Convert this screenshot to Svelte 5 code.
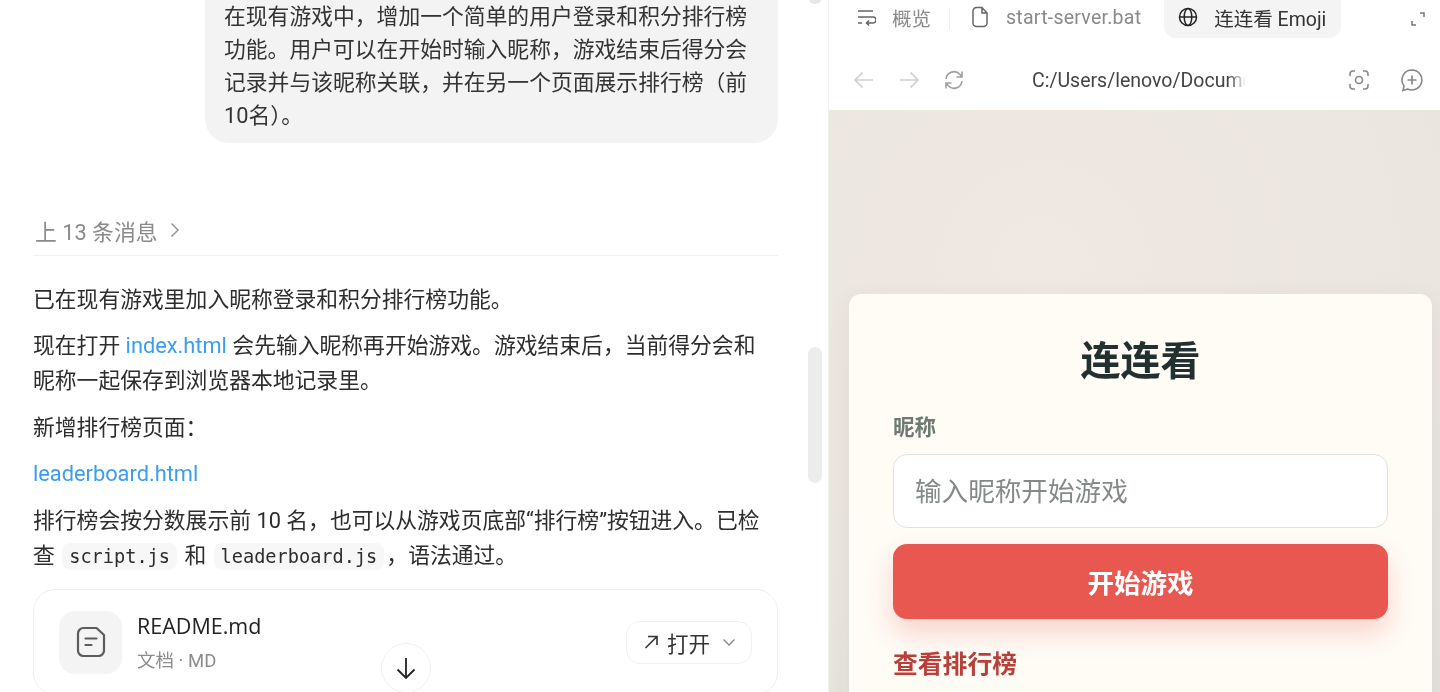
<script>
	const tabs = [
		{ label: '概览', icon: 'wrap' },
		{ label: 'start-server.bat', icon: 'file' },
		{ label: '连连看 Emoji', icon: 'globe', active: true }
	];
</script>

<div class="shell">
	<section class="chat">
		<div class="scroll">
			<div class="bubble">
				在现有游戏中，增加一个简单的用户登录和积分排行榜功能。用户可以在开始时输入昵称，游戏结束后得分会记录并与该昵称关联，并在另一个页面展示排行榜（前10名）。
			</div>
			<div class="earlier">
				<span>上 13 条消息</span>
				<svg width="12" height="18" viewBox="0 0 12 18"><path d="M2.5 2.5 9 9l-6.5 6.5" /></svg>
			</div>
			<div class="reply">
				<p>已在现有游戏里加入昵称登录和积分排行榜功能。</p>
				<p>现在打开 <a href="#top">index.html</a> 会先输入昵称再开始游戏。游戏结束后，当前得分会和昵称一起保存到浏览器本地记录里。</p>
				<p>新增排行榜页面：</p>
				<p><a href="#top">leaderboard.html</a></p>
				<p>排行榜会按分数展示前 10 名，也可以从游戏页底部“排行榜”按钮进入。已检查 <code>script.js</code> 和 <code>leaderboard.js</code>，语法通过。</p>
			</div>
			<div class="file-card">
				<div class="file-icon">
					<svg width="32" height="32" viewBox="0 0 32 32">
						<path d="M3 7.500a5.500 5.500 0 0 1 5.500-5.500h13L29 9v15.500a5.500 5.500 0 0 1-5.500 5.500h-15A5.500 5.500 0 0 1 3 24.500z" />
						<path d="M10.500 12.500h11M10.500 19h6" />
					</svg>
				</div>
				<div class="file-meta">
					<div class="file-name">README.md</div>
					<div class="file-type">文档 · MD</div>
				</div>
				<button class="open">
					<svg width="18" height="18" viewBox="0 0 18 18"><path d="M3.500 15 15 3.500M6 3.500h9V12" /></svg>
					<span>打开</span>
					<svg class="chev" width="16" height="16" viewBox="0 0 16 16"><path d="m2.500 5.500 5.500 5.500 5.500-5.500" /></svg>
				</button>
			</div>
		</div>
		<div class="thumb-top"></div>
		<div class="thumb"></div>
		<button class="down" aria-label="滚动到底部">
			<svg width="26" height="26" viewBox="0 0 26 26"><path d="M13 3v20M4.500 14.500 13 23l8.500-8.500" /></svg>
		</button>
	</section>

	<section class="preview">
		<div class="tabs">
			{#each tabs as tab, i}
				{#if i === 1}<span class="sep"></span>{/if}
				<div class="tab" class:active={tab.active} class:file={tab.icon === 'file'}>
					{#if tab.icon === 'wrap'}
						<svg width="20" height="20" viewBox="0 0 20 20"><path d="M2 4h15M2 10h15a2.700 2.700 0 0 1 0 6h-6M13 13.500 10.500 16l2.500 2.500M2 16h4" /></svg>
					{:else if tab.icon === 'file'}
						<svg width="20" height="22" viewBox="0 0 20 22"><path d="M3 5a3.500 3.500 0 0 1 3.500-3.500H12L17 7v10a3.500 3.500 0 0 1-3.500 3.500h-7A3.500 3.500 0 0 1 3 17zM12 1.500V7h5" /></svg>
					{:else}
						<svg width="20" height="20" viewBox="0 0 20 20"><circle cx="10" cy="10" r="8.500" /><ellipse cx="10" cy="10" rx="3.800" ry="8.500" /><path d="M1.500 10h17" /></svg>
					{/if}
					<span>{tab.label}</span>
				</div>
			{/each}
			<svg class="expand" width="16" height="16" viewBox="0 0 16 16"><path d="M10 2h4v4M6 14H2v-4" /></svg>
		</div>
		<div class="nav">
			<svg class="faint" width="22" height="22" viewBox="0 0 22 22"><path d="M20 11H2M9.500 3.500 2 11l7.500 7.500" /></svg>
			<svg class="faint" width="22" height="22" viewBox="0 0 22 22"><path d="M2 11h18M12.500 3.500 20 11l-7.500 7.500" /></svg>
			<svg class="reload" width="22" height="22" viewBox="0 0 22 22"><path d="M3 10a8 8 0 0 1 14-4.500l2 2.500M19 2.500V8h-5.500M19 12a8 8 0 0 1-14 4.500L3 14M3 19.500V14h5.500" /></svg>
			<div class="url">C:/Users/lenovo/Documents/game</div>
			<svg class="act" width="24" height="24" viewBox="0 0 24 24"><circle cx="12" cy="12" r="3.500" /><path d="M3 8V6a3 3 0 0 1 3-3h2M16 3h2a3 3 0 0 1 3 3v2M21 16v2a3 3 0 0 1-3 3h-2M8 21H6a3 3 0 0 1-3-3v-2" /></svg>
			<svg class="act" width="24" height="24" viewBox="0 0 24 24"><path d="M12 2a10 10 0 1 1-4.500 19L3 22.500l1-4.500A10 10 0 0 1 12 2zM12 7.500v9M7.500 12h9" /></svg>
		</div>
		<div class="page">
			<div class="card">
				<h1>连连看</h1>
				<div class="label">昵称</div>
				<input placeholder="输入昵称开始游戏" />
				<button class="start">开始游戏</button>
				<div class="rank-link">查看排行榜</div>
			</div>
		</div>
	</section>
</div>

<style>
	:global(body) {
		background: #fff;
	}
	.shell {
		display: flex;
		height: 692px;
		overflow: hidden;
		font-family: Roboto, "Noto Sans CJK SC", sans-serif;
		color: #2b2b2b;
		filter: blur(0.45px);
	}
	.chat {
		position: relative;
		width: 828px;
		flex-shrink: 0;
		border-right: 1px solid #f0f0f0;
		overflow: hidden;
	}
	.scroll {
		width: 745px;
		margin: -20px 0 0 33px;
	}
	.bubble {
		margin-left: 172px;
		width: 529px;
		padding: 20px 25px 11px 19px;
		background: #f3f3f3;
		border-radius: 24px;
		font-size: 21.8px;
		line-height: 33px;
		color: #333;
	}
	.earlier {
		display: flex;
		align-items: center;
		gap: 11px;
		margin-top: 70px;
		padding: 0 0 8px 2px;
		height: 34px;
		border-bottom: 1px solid #f1f1f1;
		font-size: 21.8px;
		color: #8a8a8a;
		box-sizing: content-box;
	}
	.earlier svg path {
		fill: none;
		stroke: #999;
		stroke-width: 1.500;
	}
	.reply {
		margin-top: 26.500px;
		padding-right: 8px;
		font-size: 21.8px;
		line-height: 34.500px;
		color: #2d2d2d;
	}
	.reply p {
		margin: 0 0 12.300px;
	}
	.reply a {
		color: #3a9df2;
		text-decoration: none;
	}
	.reply code {
		font-family: "DejaVu Sans Mono", monospace;
		font-size: 18.600px;
		padding: 3px 7px;
		margin: 0 2px;
		background: #f7f7f7;
		border-radius: 8px;
	}
	.file-card {
		display: flex;
		align-items: center;
		height: 106px;
		margin-top: 15.300px;
		padding: 0 25px;
		border: 1px solid #eeeeee;
		border-radius: 22px;
		box-sizing: border-box;
	}
	.file-icon {
		display: flex;
		align-items: center;
		justify-content: center;
		width: 63px;
		height: 63px;
		background: #f4f4f4;
		border-radius: 16px;
	}
	.file-icon path {
		fill: none;
		stroke: #5c5c5c;
		stroke-width: 2.200;
		stroke-linecap: round;
		stroke-linejoin: round;
	}
	.file-meta {
		flex: 1;
		margin-left: 15px;
		padding-top: 2px;
	}
	.file-name {
		font-family: "Open Sans", "Noto Sans CJK SC", sans-serif;
		font-size: 21.500px;
		line-height: 30px;
		color: #222;
	}
	.file-type {
		margin-top: 6px;
		font-size: 18.500px;
		line-height: 28px;
		color: #8b8b8b;
	}
	.open {
		display: flex;
		align-items: center;
		gap: 7px;
		height: 43px;
		width: 126px;
		padding: 0 12px 0 15px;
		background: #fff;
		border: 1px solid #f0f0f0;
		border-radius: 14px;
		font-family: inherit;
		font-size: 21.500px;
		color: #333;
		box-sizing: border-box;
	}
	.open svg path {
		fill: none;
		stroke: #333;
		stroke-width: 1.600;
	}
	.open .chev {
		margin-left: 4px;
	}
	.open .chev path {
		stroke: #888;
		stroke-width: 1.300;
	}
	.thumb-top,
	.thumb {
		position: absolute;
		left: 808px;
		width: 14px;
		background: #ececec;
		border-radius: 7px;
	}
	.thumb-top {
		top: -10px;
		height: 14px;
		background: #e6e6e6;
	}
	.thumb {
		top: 347px;
		height: 136px;
	}
	.down {
		position: absolute;
		left: 381px;
		top: 643px;
		display: flex;
		align-items: center;
		justify-content: center;
		width: 50px;
		height: 50px;
		padding: 0;
		background: #fff;
		border: 1px solid #eeeeee;
		border-radius: 50%;
	}
	.down path {
		fill: none;
		stroke: #222;
		stroke-width: 1.800;
	}
	.preview {
		flex: 1;
		min-width: 0;
		display: flex;
		flex-direction: column;
	}
	.preview svg {
		flex-shrink: 0;
		fill: none;
	}
	.tabs {
		display: flex;
		align-items: center;
		flex-shrink: 0;
		height: 38px;
		padding-left: 27px;
		font-size: 19.500px;
		color: #8a8a8a;
	}
	.tabs svg {
		stroke: #666;
		stroke-width: 1.500;
	}
	.tab {
		display: flex;
		align-items: center;
		gap: 16px;
		height: 38px;
		padding-bottom: 4px;
		box-sizing: border-box;
	}
	.tab.file {
		letter-spacing: 0.25px;
	}
	.sep {
		width: 1px;
		height: 22px;
		margin: 0 20px 0 18px;
		background: #eee;
	}
	.tab.active {
		margin-left: 23px;
		padding: 0 15px 4px 14px;
		gap: 16px;
		background: #f4f4f4;
		border-radius: 0 0 12px 12px;
		color: #333;
	}
	.tab.active svg {
		stroke: #222;
	}
	.tabs .expand {
		margin-left: auto;
		margin-right: 14px;
		stroke: #777;
	}
	.nav {
		display: flex;
		align-items: center;
		flex-shrink: 0;
		height: 72px;
		padding: 12px 16px 0 24px;
		box-sizing: border-box;
	}
	.nav svg {
		stroke: #888;
		stroke-width: 1.600;
	}
	.nav svg.faint {
		stroke: #cfcfcf;
		margin-right: 23px;
	}
	.nav svg.reload {
		stroke: #a0a0a0;
	}
	.url {
		width: 214px;
		margin: 0 101px 0 67px;
		overflow: hidden;
		white-space: nowrap;
		font-size: 19.500px;
		color: #444;
		mask-image: linear-gradient(to right, #000 92%, transparent);
	}
	.nav svg.act {
		margin-right: 29px;
	}
	.nav svg.act:last-child {
		margin-right: 0;
	}
	.page {
		flex: 1;
		padding: 184px 8px 0 20px;
		background: radial-gradient(circle at 35% 25%, #f0e8e2 0%, #ebe6e0 60%, #e4e2dc 100%);
	}
	.card {
		height: 440px;
		padding: 40px 44px 0;
		background: #fffbf5;
		border-radius: 12px;
		box-shadow: 0 8px 30px rgba(60, 50, 40, 0.07);
		box-sizing: border-box;
	}
	h1 {
		margin: 0 0 24px;
		text-align: center;
		font-size: 40px;
		line-height: 56px;
		font-weight: 700;
		color: #22302f;
	}
	.label {
		margin-bottom: 12px;
		font-size: 21.500px;
		line-height: 28px;
		font-weight: 700;
		color: #6d7a74;
	}
	input {
		display: block;
		width: 100%;
		height: 74px;
		padding: 0 21px;
		background: #fff;
		border: 1px solid #dfe3de;
		border-radius: 14px;
		font-family: inherit;
		font-size: 26.600px;
		box-sizing: border-box;
	}
	input::placeholder {
		color: #848a88;
	}
	.start {
		display: block;
		width: 100%;
		height: 75px;
		margin-top: 16px;
		background: #e95850;
		border: none;
		border-radius: 14px;
		box-shadow: 0 14px 26px rgba(233, 88, 80, 0.24);
		font-family: inherit;
		font-size: 26.500px;
		font-weight: 700;
		color: #fff;
	}
	.rank-link {
		margin-top: 29px;
		font-size: 24.800px;
		line-height: 34px;
		font-weight: 700;
		color: #b8403c;
	}
</style>
